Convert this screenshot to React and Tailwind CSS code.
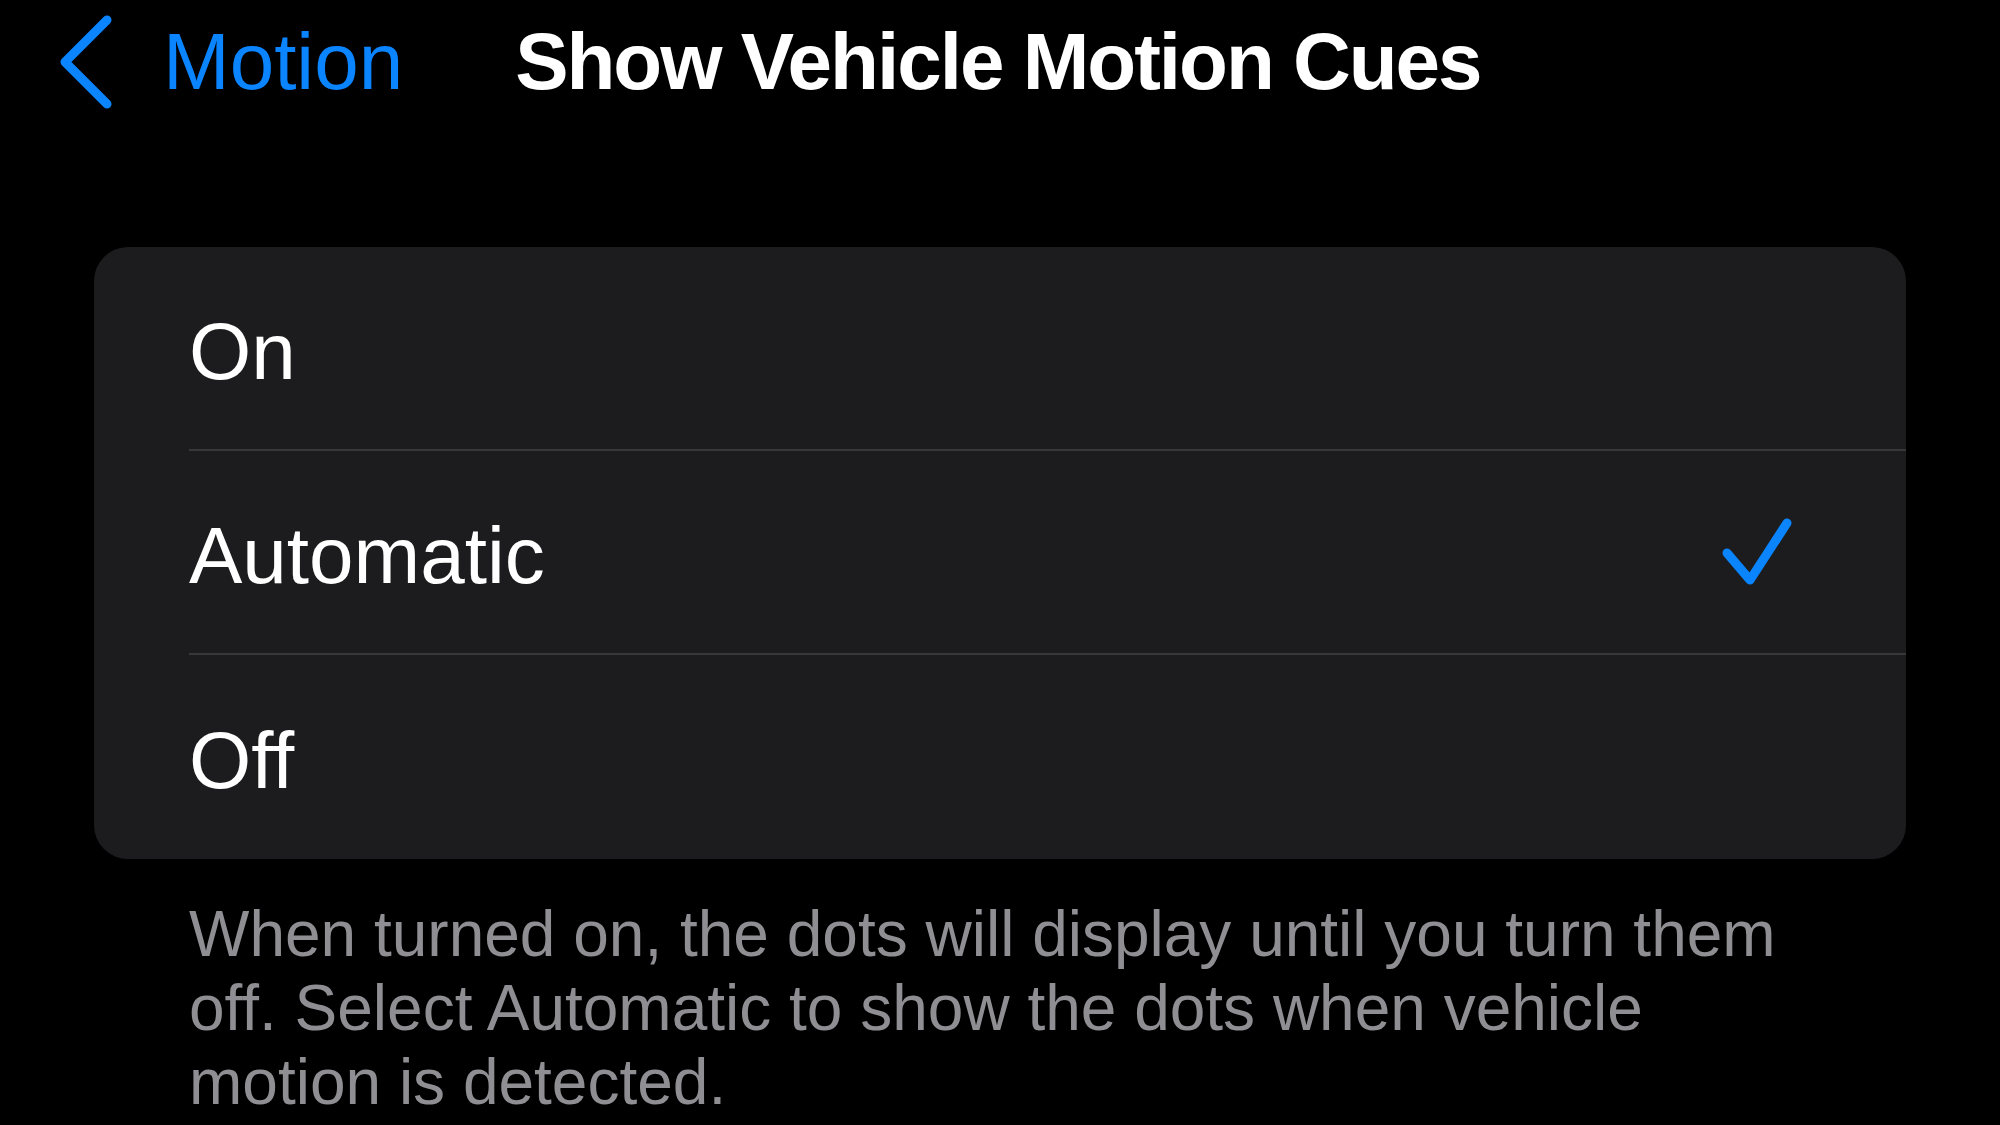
const options = [
  { label: "On", selected: false },
  { label: "Automatic", selected: true },
  { label: "Off", selected: false },
];

const ChevronLeft = () => (
  <svg width="60" height="100" viewBox="0 0 60 100" className="shrink-0">
    <path
      d="M51 8 L9 50 L51 92"
      fill="none"
      stroke="#0a84ff"
      strokeWidth="9"
      strokeLinecap="round"
      strokeLinejoin="round"
    />
  </svg>
);

const Check = () => (
  <svg width="80" height="80" viewBox="0 0 80 80">
    <path
      d="M13 37 L36 64 L73 7"
      fill="none"
      stroke="#0a84ff"
      strokeWidth="9"
      strokeLinecap="round"
      strokeLinejoin="round"
    />
  </svg>
);

const App = () => {
  return (
    <div
      className="w-[2000px] h-[1125px] bg-black overflow-hidden"
      style={{ fontFamily: '"Liberation Sans", Arial, sans-serif' }}
    >
      {/* nav bar */}
      <div className="flex items-center h-[105px] pt-[18px] pl-[56px]">
        <button className="flex items-center text-[#0a84ff]">
          <ChevronLeft />
          <span className="ml-[47px] text-[80px] leading-none">Motion</span>
        </button>
        <h1 className="ml-[112px] text-[80px] leading-none font-bold text-white tracking-[-2px]">
          Show Vehicle Motion Cues
        </h1>
      </div>

      {/* options card */}
      <div className="mt-[142px] ml-[94px] w-[1812px] bg-[#1c1c1e] rounded-[34px] overflow-hidden">
        {options.map((opt, i) => (
          <div key={opt.label} className="flex pl-[95px] h-[204px]">
            <div
              className={`flex-1 flex items-center justify-between pr-[112px] pt-[8px] ${
                i < options.length - 1 ? "border-b-2 border-[#38383a]" : ""
              }`}
            >
              <span className="text-[80px] leading-none text-white">{opt.label}</span>
              {opt.selected && <Check />}
            </div>
          </div>
        ))}
      </div>

      {/* footer */}
      <p className="mt-[38px] ml-[189px] w-[1640px] text-[64px] leading-[74px] text-[#8e8e93]">
        When turned on, the dots will display until you turn them off. Select Automatic to show the dots
        when vehicle motion is detected.
      </p>
    </div>
  );
};

export default App;
